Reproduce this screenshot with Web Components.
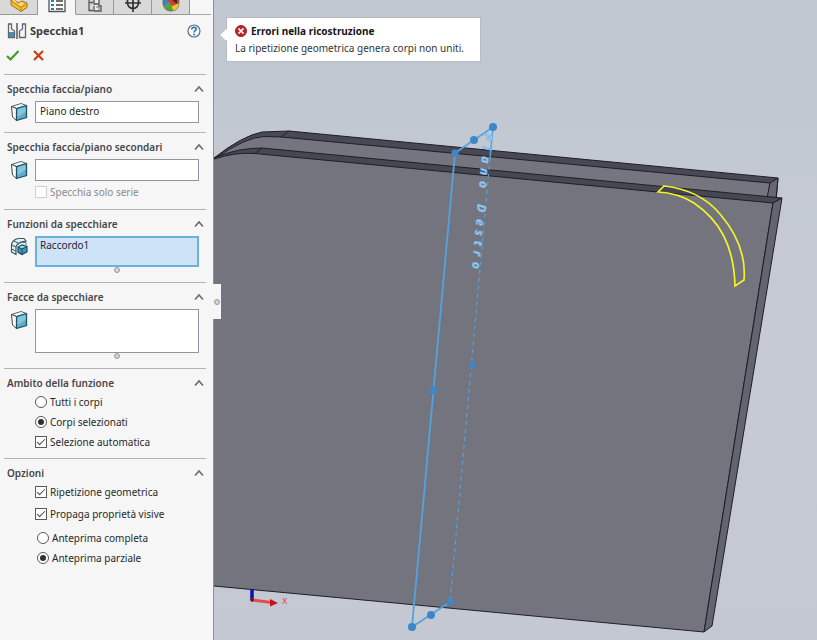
<!DOCTYPE html>
<html lang="it">
<head>
<meta charset="utf-8">
<title>Specchia1</title>
<style>
html, body { height: 100%; }
body { margin: 0; font-family: "Noto Sans", "Open Sans", sans-serif; font-size: 10px; color: #222; }
</style>
</head>
<body>
<cad-app></cad-app>

<script>
const define = (name, html, setup) => {
  const tpl = document.createElement('template');
  tpl.innerHTML = html;
  customElements.define(name, class extends HTMLElement {
    connectedCallback() {
      if (this.shadowRoot) return;
      this.attachShadow({ mode: 'open' }).append(tpl.content.cloneNode(true));
      if (setup) setup(this, this.shadowRoot);
    }
  });
};

const ICONS = {
  face: `<svg viewBox="0 0 18 20" width="18" height="20"><path d="M1.500 4.500 11 1.500 16.500 3.500 6.500 6.500Z" fill="#f8fbfb" stroke="#53666b"/><path d="M1.500 4.500 6.500 6.500V18.500L2.500 15Z" fill="#fff" stroke="#34464b"/><path d="M6.500 6.500 16.500 3.500V15.500L6.500 18.500Z" fill="#61abc8" stroke="#1d536a" stroke-width="1.300"/><path d="M7.500 7.500 15.500 5V10L7.500 15Z" fill="#9bd0e0" opacity=".7"/></svg>`,
  features: `<svg viewBox="0 0 18 20" width="18" height="20"><path d="M1.500 15V8Q2 3 8 1.500H14L16 4 11 5Q7 6 6 10V17.500Z" fill="#e4eff2" stroke="#3b5761" stroke-width="1.200"/><path d="M1.500 8 6 10M4 4 8 6M1.500 12 6 14" stroke="#3b5761" fill="none"/><path d="M8 8Q9 5.500 12 5.500H16V8" stroke="#4c7888" fill="none"/><path d="M8 10 12 8 17 9.500V15L12 17.500 8 15.500Z" fill="#4594b5" stroke="#184e66" stroke-width="1.200"/><path d="M8 10 12 12 17 9.500M12 12V17.500" stroke="#184e66" fill="none"/><path d="M9 10 12 8.800 15.500 9.800 12 11Z" fill="#b7e2ed"/></svg>`
};

define('tab-strip', `
<style>
:host { display: block; }
nav { display: flex; height: 15px; box-sizing: border-box; }
button { flex: 0 1 38px; min-width: 0; padding: 0; border: 0; border-right: 1px solid #99999b; border-bottom: 1px solid #99999b; background: #d9d9da; display: flex; justify-content: center; overflow: hidden; }
button[aria-selected=true] { background: #f6f6f6; border-bottom-color: transparent; }
span { flex: 1; border-bottom: 1px solid #aaaaab; margin-right: 2px; }
svg { display: block; flex: none; }
</style>
<nav role="tablist">
<button role="tab" aria-label="Albero"><svg width="20" height="13" viewBox="0 0 20 13"><path d="M2 0V5L12 11.500 18 7.500V3L13 1 9 3 6 0Z" fill="#f5bd32" stroke="#9a711b"/><path d="M2 1 12 7.500 18 3.500M12 7.500V11" fill="none" stroke="#b88920"/><path d="M3 0 12 6 15 3.500 12 2 9 4 6 0Z" fill="#ffdc72"/></svg></button>
<button role="tab" aria-selected="true" aria-label="Proprietà"><svg width="18" height="13" viewBox="0 0 18 13"><path d="M1 0V11.500H17V0" fill="#fff" stroke="#4b555b" stroke-width="1.300"/><path d="M3 0H6V2H3ZM3 4H6V6H3ZM3 8H6V10H3Z" fill="#347da2"/><path d="M8 1H15M8 5H15M8 9H15" stroke="#444" stroke-width="1.400"/></svg></button>
<button role="tab" aria-label="Configurazioni"><svg width="18" height="13" viewBox="0 0 18 13"><path d="M3 0V10.500H7M3 2.500H7" fill="none" stroke="#555" stroke-width="1.300"/><path d="M8 0V4H13V0M8 6V11H15V6H13V4" fill="#eee" stroke="#555" stroke-width="1.300"/><path d="M10 7H13V10" fill="none" stroke="#777"/></svg></button>
<button role="tab" aria-label="Quote"><svg width="18" height="13" viewBox="0 0 18 13"><path d="M3.500 0V3A5.500 5.500 0 0 0 14.500 3V0M1 3H17M9 0V12" fill="none" stroke="#303033" stroke-width="1.700"/></svg></button>
<button role="tab" aria-label="Aspetto"><svg width="20" height="13" viewBox="0 0 20 13"><path d="M10 1H18Q18 9 11 11Z" fill="#f1c62f"/><path d="M10 1 12 11Q5 12 3 7Z" fill="#51a43a"/><path d="M10 1 3 7Q1 4 2 0H10Z" fill="#437eb7"/><path d="M7 0H18V3L12 6 9 4Z" fill="#d63d2d"/><path d="M11 0 16 4V0Z" fill="#3c2826"/><path d="M2 0Q1 11 10 11T18 0" fill="none" stroke="#776d51" stroke-width=".8"/></svg></button>
<span></span>
</nav>`);

define('panel-title', `
<style>
:host { display: block; padding: 6px 12px 9px 7px; }
.row { display: flex; align-items: center; height: 20px; }
h1 { flex: 1; margin: 0 0 0 3px; font-size: 11px; line-height: 20px; font-weight: 700; color: #3c3c3e; }
button { border: 0; padding: 0; background: none; display: block; }
svg { display: block; }
.actions { display: flex; gap: 12px; padding-top: 5px; height: 19px; align-items: center; }
button:first-child svg { margin-left: -1px; }
</style>
<div class="row">
<svg width="20" height="18" viewBox="0 0 20 18"><path d="M1.500 2V15.500H7.500V9L4.500 7V2ZM18.500 2V15.500H12.500V9L15.500 7V2Z" fill="#f4f5f5" stroke="#60666a" stroke-width="1.300"/><path d="M2 10H7V15H2Z" fill="#3f91b5"/><path d="M10 1V17" stroke="#3f4143" stroke-width="1.300"/></svg>
<h1><slot></slot></h1>
<button aria-label="Guida"><svg width="14" height="14" viewBox="0 0 14 14"><circle cx="7" cy="7" r="6" fill="#f7fafb" stroke="#5d6e7a" stroke-width="1.200"/><path d="M4.800 5.500Q4.800 3.300 7.100 3.300 9.300 3.400 9.200 5.200C9.200 6.600 7.100 6.700 7.100 8.500" fill="none" stroke="#267aa7" stroke-width="1.600"/><circle cx="7.100" cy="10.600" r="1" fill="#267aa7"/></svg></button>
</div>
<div class="actions">
<button aria-label="OK"><svg width="14" height="13" viewBox="0 0 14 13"><path d="M1 7 4.500 10.500 12.500 2" fill="none" stroke="#449d1c" stroke-width="2.200"/></svg></button>
<button aria-label="Annulla"><svg width="13" height="13" viewBox="0 0 13 13"><path d="M2 2 11 11M11 2 2 11" stroke="#ce3d16" stroke-width="2.200"/></svg></button>
</div>`);

define('panel-section', `
<style>
:host { display: block; margin: 0 7px 0 4px; padding: 5px 0 0 3px; border-top: 1px solid #b4b4b5; }
header { display: flex; align-items: center; justify-content: space-between; height: 18px; padding-right: 2px; }
h2 { margin: 0; font-size: 10px; line-height: 18px; font-weight: 600; color: #47474a; white-space: nowrap; }
button { border: 0; padding: 0; background: none; display: block; }
svg { display: block; }
</style>
<header><h2></h2><button aria-label="Comprimi"><svg width="10" height="8" viewBox="0 0 10 8"><path d="M1 6.500 5 2 9 6.500" fill="none" stroke="#69696b" stroke-width="1.600"/></svg></button></header>
<slot></slot>`, (host, root) => {
  root.querySelector('h2').textContent = host.getAttribute('heading');
});

define('selection-box', `
<style>
:host { display: block; padding-top: 3px; }
.row { display: grid; grid-template-columns: 28px 1fr; padding-right: 7px; align-items: start; }
.icon { padding: 1px 0 0 3px; height: 20px; }
input, textarea { display: block; box-sizing: border-box; width: 100%; margin: 0; padding: 0 4px; border: 1px solid #9394a0; border-radius: 0; background: #fff; font: inherit; line-height: 16px; color: #25252d; outline: 0; resize: none; overflow: hidden; }
input { height: 22px; padding-bottom: 3px; }
.active { border: 2px solid #6bb1dd; background: #cee3f8; padding: 0 3px; line-height: 15px; }
.handle { display: block; width: 6px; height: 6px; box-sizing: border-box; border: 1px solid #989899; border-radius: 50%; background: #d5d5d6; margin: 0 auto; }
.grip { grid-column: 2; }
</style>
<div class="row"><div class="icon"></div></div>`, (host, root) => {
  const rows = Number(host.getAttribute('height'));
  const field = document.createElement(rows ? 'textarea' : 'input');
  field.setAttribute('aria-label', host.getAttribute('label'));
  field.value = host.getAttribute('value') || '';
  if (rows) field.style.height = rows + 'px';
  if (host.hasAttribute('active')) field.className = 'active';
  root.querySelector('.icon').innerHTML = ICONS[host.getAttribute('icon')];
  const row = root.querySelector('.row');
  row.append(field);
  if (rows) row.insertAdjacentHTML('beforeend', '<div class="grip"><i class="handle"></i></div>');
});

define('choice-item', `
<style>
:host { display: flex; height: 20px; align-items: center; }
label { display: flex; align-items: center; gap: 3px; line-height: 18px; white-space: nowrap; color: #29292b; }
input { appearance: none; display: grid; place-content: center; box-sizing: border-box; width: 12px; height: 12px; margin: 0; border: 1px solid #5a5a5c; background: #fff; }
input[type=radio] { border-radius: 50%; }
input[type=radio]:checked::before { content: ""; width: 6px; height: 6px; border-radius: 50%; background: #303032; }
input[type=checkbox]:checked::before { content: ""; width: 7px; height: 3px; border: solid #48484a; border-width: 0 0 1px 1px; transform: translateY(-1px) rotate(-45deg); }
input:disabled { border-color: #cfcfd0; }
input:disabled + span { color: #8b8b8d; }
</style>
<label><input><span></span></label>`, (host, root) => {
  const input = root.querySelector('input');
  input.type = host.getAttribute('type');
  input.checked = host.hasAttribute('checked');
  input.disabled = host.hasAttribute('disabled');
  root.querySelector('span').textContent = host.getAttribute('label');
});

define('property-panel', `
<style>
:host { display: block; box-sizing: border-box; background: #f6f6f6; border-right: 1px solid #8c8e98; }
.choices { display: flex; flex-direction: column; padding-left: 28px; }
.serie { padding: 1px 0 7px 28px; }
.end { padding-bottom: 9px; }
.scope { padding-bottom: 6px; }
.options { gap: 2px; }
.preview { padding: 4px 0 0 30px; }
</style>
<tab-strip></tab-strip>
<panel-title>Specchia1</panel-title>
<panel-section heading="Specchia faccia/piano"><selection-box class="end" icon="face" label="Specchia faccia/piano" value="Piano destro"></selection-box></panel-section>
<panel-section heading="Specchia faccia/piano secondari"><selection-box icon="face" label="Specchia faccia/piano secondari"></selection-box><div class="choices serie"><choice-item type="checkbox" label="Specchia solo serie" disabled></choice-item></div></panel-section>
<panel-section heading="Funzioni da specchiare"><selection-box class="end" icon="features" label="Funzioni da specchiare" value="Raccordo1" height="31" active></selection-box></panel-section>
<panel-section heading="Facce da specchiare"><selection-box class="end" icon="face" label="Facce da specchiare" height="44"></selection-box></panel-section>
<panel-section heading="Ambito della funzione"><div class="choices scope"><choice-item type="radio" label="Tutti i corpi"></choice-item><choice-item type="radio" label="Corpi selezionati" checked></choice-item><choice-item type="checkbox" label="Selezione automatica" checked></choice-item></div></panel-section>
<panel-section heading="Opzioni"><div class="choices options"><choice-item type="checkbox" label="Ripetizione geometrica" checked></choice-item><choice-item type="checkbox" label="Propaga proprietà visive" checked></choice-item></div><div class="choices preview"><choice-item type="radio" label="Anteprima completa"></choice-item><choice-item type="radio" label="Anteprima parziale" checked></choice-item></div></panel-section>`);

define('error-callout', `
<style>
:host { display: block; box-sizing: border-box; min-width: 255px; background: #fff; border: 1px solid #b7bbc3; padding: 4px 6px 4px 8px; }
:host::before { content: ""; position: absolute; left: -5px; top: 13px; width: 8px; height: 8px; background: #fff; transform: rotate(45deg); }
strong { display: flex; align-items: center; gap: 4px; font-size: 10px; line-height: 18px; color: #161616; }
p { margin: 0; line-height: 17px; color: #353438; white-space: nowrap; }
svg { display: block; }
</style>
<strong><svg width="12" height="12" viewBox="0 0 12 12"><circle cx="6" cy="6" r="5.500" fill="#bd2428" stroke="#8e292c"/><path d="M3.500 3.500 8.500 8.500M8.500 3.500 3.500 8.500" stroke="#fff" stroke-width="1.700"/></svg><slot name="title"></slot></strong>
<p><slot></slot></p>`);

define('model-view', `
<style>
:host { display: block; min-width: 0; overflow: hidden; background: linear-gradient(#c1c7d1, #c5cad4 50%, #c3c8d2); }
svg { display: block; width: 100%; height: 100%; }
text { font-family: "Noto Sans", sans-serif; }
</style>
<svg viewBox="214 0 603 640" preserveAspectRatio="xMinYMin slice">
<g stroke="#1d1e28" stroke-width="1" stroke-linejoin="round">
<path d="M214 158Q242 136 262 132L289 131 778 178 776 202 214 190Z" fill="#484954"/>
<path d="M214 159Q246 137 264 136.500L281 137 770 183 767 204 214 180Z" fill="#74757f"/>
<path d="M770 183 778 178 776 199 767 198Z" fill="#656670"/>
<path d="M281 137 289 131" />
<path d="M214 158Q237 148 262 148L782 198 773 203 214 185Z" fill="#464751"/>
<path d="M214 159Q235 152 255 153.500L773 203 704 632 214 586Z" fill="#73747d" stroke="none"/>
<path d="M214 159Q235 152 255 153.500L773 203 704 632 214 586" fill="none"/>
<path d="M773 203 782 198 712 626 704 632Z" fill="#63646f"/>
<path d="M255 153.500 262 148"/>
</g>
<path d="M658 192 664 186Q700 190 720 214C738 235 746 257 744 280L735 286C734 245 719 220 694 203Q678 193 658 192Z" fill="none" stroke="#f3f427" stroke-width="1.700"/>
<g stroke="#54a2e2" fill="none">
<path d="M493 127 455 153 412 627 450 602" stroke-width="1.800"/>
<path d="M493 127 490 158" stroke-width="1.500"/>
<path d="M490 158 450 602" stroke-width="1.200" stroke-dasharray="4 4"/>
</g>
<g fill="#3f86c9">
<circle cx="493" cy="127" r="4"/><circle cx="474" cy="140" r="4"/><circle cx="455" cy="153" r="3.500"/>
<circle cx="433.500" cy="390" r="4"/><circle cx="472" cy="365" r="3.200"/>
<circle cx="450" cy="602" r="3.500"/><circle cx="431" cy="615" r="4"/><circle cx="412" cy="627" r="4"/>
</g>
<text transform="translate(484 132) rotate(95)" x="1 14 24 36 49 72 87 98 109 119 130" y="0" font-size="12" font-weight="700" font-style="italic" fill="#a3cdef" stroke="#6fb1e8" stroke-width=".6">PianoDestro</text>
<path d="M252 589V600" stroke="#1013a4" stroke-width="3.500"/>
<path d="M252 600 272 602.500" stroke="#e34b4b" stroke-width="3"/><path d="M270 599 278 603 270 606.500Z" fill="#c61218"/><circle cx="252" cy="600" r="1.800" fill="#6c1022"/>
<text x="282" y="604" font-size="10" fill="#dc5058">x</text>
</svg>`);

define('cad-app', `
<style>
:host { display: grid; grid-template-columns: 214px 1fr; min-height: 100%; position: relative; overflow: hidden; }
error-callout { position: absolute; left: 226px; top: 17px; }
.pull { position: absolute; left: 213px; top: 284px; width: 8px; height: 35px; padding: 0; border: 0; background: #f6f6f6; display: grid; place-content: center; }
.pull i { box-sizing: border-box; width: 6px; height: 6px; border: 1px solid #969698; border-radius: 50%; background: #d5d5d6; }
</style>
<property-panel></property-panel>
<model-view></model-view>
<button class="pull" aria-label="Riduci pannello"><i></i></button>
<error-callout><span slot="title">Errori nella ricostruzione</span>La ripetizione geometrica genera corpi non uniti.</error-callout>`);
</script>
</body>
</html>
